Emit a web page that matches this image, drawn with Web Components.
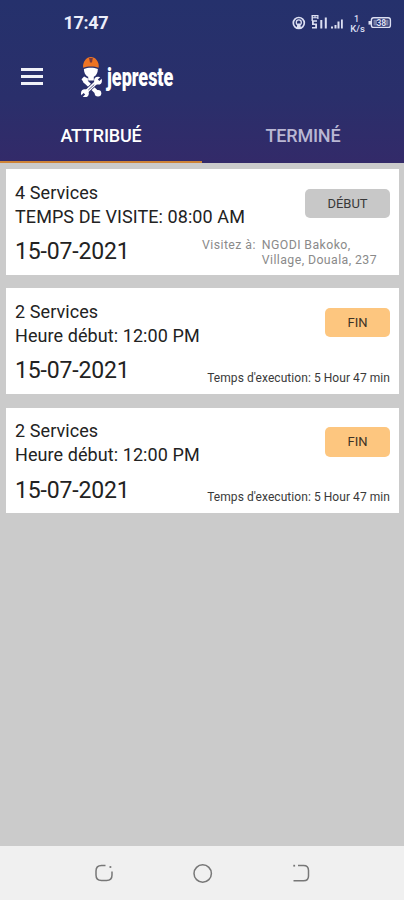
<!DOCTYPE html>
<html lang="fr">
<head>
<meta charset="UTF-8">
<meta name="viewport" content="width=device-width, initial-scale=1">
<title>jepreste</title>
<style>
  html, body {
    margin: 0;
    height: 100%;
  }

  body {
    font-family: Roboto, "Liberation Sans", sans-serif;
    color: #222;
    overflow: hidden;
  }
</style>
</head>
<body>
<jp-app>
  <jp-header slot="header">
    <jp-status-bar time="17:47"></jp-status-bar>
    <jp-toolbar></jp-toolbar>
    <jp-tabs>
      <jp-tab active>ATTRIBUÉ</jp-tab>
      <jp-tab>TERMINÉ</jp-tab>
    </jp-tabs>
  </jp-header>

  <jp-card>
    <span slot="title">4 Services</span>
    <span slot="subtitle">TEMPS DE VISITE: 08:00 AM</span>
    <span slot="date">15-07-2021</span>
    <jp-button slot="action" kind="start">DÉBUT</jp-button>
    <jp-address slot="detail" label="Visitez à:">NGODI Bakoko,<br>Village, Douala, 237</jp-address>
  </jp-card>

  <jp-card>
    <span slot="title">2 Services</span>
    <span slot="subtitle">Heure début: 12:00 PM</span>
    <span slot="date">15-07-2021</span>
    <jp-button slot="action" kind="end">FIN</jp-button>
    <jp-duration slot="detail">Temps d'execution: 5 Hour 47 min</jp-duration>
  </jp-card>

  <jp-card>
    <span slot="title">2 Services</span>
    <span slot="subtitle">Heure début: 12:00 PM</span>
    <span slot="date">15-07-2021</span>
    <jp-button slot="action" kind="end">FIN</jp-button>
    <jp-duration slot="detail">Temps d'execution: 5 Hour 47 min</jp-duration>
  </jp-card>

  <jp-nav-bar slot="footer"></jp-nav-bar>
</jp-app>

<script>
// Base commune : chaque composant fournit son template()
class JpElement extends HTMLElement {
  constructor() {
    super();
    this.attachShadow({ mode: 'open' });
  }

  connectedCallback() {
    this.shadowRoot.innerHTML = this.template();
  }
}

// ===== STRUCTURE =====
class JpApp extends JpElement {
  template() {
    return `
      <style>
        :host {
          display: flex;
          flex-direction: column;
          height: 100vh;
          background: #cbcbcb;
        }

        main {
          flex: 1;
          display: flex;
          flex-direction: column;
          gap: 13.7px;
          padding: 6.5px 5px 0 6px;
        }
      </style>
      <slot name="header"></slot>
      <main><slot></slot></main>
      <slot name="footer"></slot>
    `;
  }
}

class JpHeader extends JpElement {
  template() {
    return `
      <style>
        :host {
          display: flex;
          flex-direction: column;
          height: 162.5px;
          background: linear-gradient(#25316c, #2a2f6b 60%, #332a69);
          color: #fff;
        }
      </style>
      <slot></slot>
    `;
  }
}

// ===== BARRE DE STATUT =====
class JpStatusBar extends JpElement {
  template() {
    return `
      <style>
        :host {
          display: flex;
          justify-content: space-between;
          align-items: center;
          height: 46px;
          padding: 0 12px 0 63.5px;
          color: #eceefa;
        }

        time {
          font-size: 18px;
          font-weight: 700;
          line-height: 46px;
          letter-spacing: -0.3px;
        }
      </style>
      <time>${this.getAttribute('time')}</time>
      <svg width="101" height="26" viewBox="291 10 101 26" fill="#dcdff2" aria-hidden="true">
        <!-- Point d'accès -->
        <circle cx="298.8" cy="23" r="5.5" fill="none" stroke="#dcdff2" stroke-width="1.7"/>
        <circle cx="298.8" cy="22.4" r="2.5" fill="none" stroke="#dcdff2" stroke-width="1.3"/>
        <path d="M297.5 23.5h2.6l1 5h-4.6z"/>
        <!-- Réseaux -->
        <path d="M311.5 15h7v1.2h-7zM311.5 17.2h7v1h-7zM311.5 15h1.4v6h-1.4zM314.5 15h1v3h-1zM317.3 15h1.2v4h-1.2z"/>
        <path d="M312 20.2h5v1.6h-3.2v1.6h3.2v5h-5v-1.5h3.2v-2h-3.2z"/>
        <path d="M320.3 20h2v8.5h-2zM324.8 17.5h2v11h-2z"/>
        <path d="M331 26.5h2v2h-2zM334.5 25h2v3.5h-2zM337.5 21.5h2v7h-2zM341 19.5h1.8v9H341z"/>
        <!-- Débit -->
        <text x="356.5" y="21.5" font-size="9" font-weight="500" text-anchor="middle">1</text>
        <text x="357.5" y="32" font-size="9.5" font-weight="500" text-anchor="middle">K/s</text>
        <!-- Batterie -->
        <path d="M373.6 17.8h14.6q2.2 0 2.2 2.2v5.2q0 2.2-2.2 2.2h-14.6q-2.2 0-2.2-2.2V20q0-2.2 2.2-2.2z" fill="none" stroke="#dcdff2" stroke-width="1.4"/>
        <path d="M368.5 21h3v3.6h-3z"/>
        <path d="M373.5 19.8h3.5v5.6h-3.5zM385.5 19.8h3v5.6h-3z" opacity=".45"/>
        <text x="381.3" y="25.8" font-size="8.5" font-weight="700" text-anchor="middle">38</text>
      </svg>
    `;
  }
}

// ===== MENU + LOGO =====
class JpToolbar extends JpElement {
  template() {
    return `
      <style>
        :host {
          display: flex;
          align-items: center;
          height: 64px;
          padding-left: 21px;
        }

        button {
          width: 22px;
          height: 17px;
          padding: 0;
          border: 0;
          background: none;
          display: flex;
          flex-direction: column;
          justify-content: space-between;
          margin: -3px 37px 0 0;
        }

        i {
          display: block;
          height: 2.6px;
          background: #f0f1f8;
        }

        .brand {
          margin: -2px 0 0 1px;
          font-size: 26px;
          font-weight: 900;
          line-height: 36px;
          transform: scaleX(0.69);
          transform-origin: left;
        }
      </style>
      <button aria-label="Menu"><i></i><i></i><i></i></button>
      <svg width="26" height="52" viewBox="80 52 26 52" aria-hidden="true">
        <!-- Casque -->
        <path d="M83.2 67.8c-.5-2 .1-5.6 2.2-8 2-3.6 8.6-4 11 0 2.2 2.3 2.7 6 2.2 8-4.2-1.6-11-1.6-15.4 0z" fill="#ee7423"/>
        <path d="M89 58h3.8l-.8 4.5h-2z" fill="#7b3a3d"/>
        <!-- Tête -->
        <path d="M83.9 68.9c4-1.6 9.8-1.6 14 0 0 4.2-2 6.8-4 7.8h-6c-2.5-1.1-4-4.2-4-7.8z" fill="#fff"/>
        <path d="M88.2 76h5.6v4.5h-5.6z" fill="#fff"/>
        <!-- Clé et marteau croisés -->
        <path d="M84.5 80.5l12.5 12" stroke="#fff" stroke-width="4"/>
        <path d="M81.5 79.2l2.6-2.7 3.9 2-.3 4-3.5.7z" fill="#fff"/>
        <circle cx="98" cy="93.2" r="3.3" fill="#fff"/>
        <path d="M97.5 81.2L84.8 93" stroke="#2a2f6b" stroke-width="5"/>
        <path d="M97.5 81.2L84.8 93" stroke="#fff" stroke-width="3.6"/>
        <circle cx="98" cy="80.7" r="3.9" fill="#fff"/>
        <circle cx="84.9" cy="93.2" r="3.9" fill="#fff"/>
        <path d="M98.6 80.3l4-4M84.4 93.7l-4 4" stroke="#2a2f6b" stroke-width="2.2"/>
        <path d="M94.3 84.5l-6 5.5" stroke="#2a2f6b" stroke-width=".8"/>
      </svg>
      <span class="brand">jepreste</span>
    `;
  }
}

// ===== ONGLETS =====
class JpTabs extends JpElement {
  template() {
    return `
      <style>
        :host {
          display: flex;
          flex: 1;
        }
      </style>
      <slot></slot>
    `;
  }
}

class JpTab extends JpElement {
  template() {
    return `
      <style>
        :host {
          flex: 1;
          box-sizing: border-box;
          text-align: center;
          font-size: 18px;
          font-weight: 500;
          line-height: 52px;
          letter-spacing: -0.2px;
          height: 52.5px;
          color: #b9b7d3;
          border-bottom: 2.5px solid transparent;
        }

        :host([active]) {
          color: #fff;
          border-bottom-color: #cf8437;
        }
      </style>
      <slot></slot>
    `;
  }
}

// ===== CARTES =====
class JpCard extends JpElement {
  template() {
    return `
      <style>
        :host {
          display: flex;
          flex-direction: column;
          box-sizing: border-box;
          height: 105.6px;
          padding: 11.5px 9px 0 9px;
          background: #fff;
          white-space: nowrap;
        }

        .row {
          display: flex;
          justify-content: space-between;
          align-items: flex-start;
        }

        .top {
          height: 49px;
        }

        .lines {
          font-size: 18px;
          line-height: 24px;
          letter-spacing: 0.08px;
        }

        .lines div {
          height: 24px;
        }

        .action {
          padding-top: 8px;
        }

        .date {
          font-size: 23px;
          line-height: 27px;
          letter-spacing: -0.15px;
          padding-top: 8.5px;
        }
      </style>
      <div class="row top">
        <div class="lines">
          <div><slot name="title"></slot></div>
          <div><slot name="subtitle"></slot></div>
        </div>
        <div class="action"><slot name="action"></slot></div>
      </div>
      <div class="row">
        <div class="date"><slot name="date"></slot></div>
        <slot name="detail"></slot>
      </div>
    `;
  }
}

class JpButton extends JpElement {
  template() {
    return `
      <style>
        :host {
          display: block;
        }

        button {
          display: block;
          width: 65px;
          height: 29.5px;
          padding: 0;
          border: 0;
          border-radius: 5px;
          background: #fdc67f;
          color: #3c3226;
          font: 400 13px/30px Roboto, "Liberation Sans", sans-serif;
        }

        :host([kind="start"]) button {
          width: 85px;
          background: #c8c8c8;
          color: #383838;
        }
      </style>
      <button><slot></slot></button>
    `;
  }
}

class JpAddress extends JpElement {
  template() {
    return `
      <style>
        :host {
          display: flex;
          gap: 6px;
          padding: 8px 13px 0 0;
          font-size: 12.3px;
          line-height: 15px;
          letter-spacing: 0.42px;
          color: #8a8a8a;
        }
      </style>
      <span>${this.getAttribute('label')}</span>
      <span><slot></slot></span>
    `;
  }
}

class JpDuration extends JpElement {
  template() {
    return `
      <style>
        :host {
          display: block;
          padding-top: 22px;
          font-size: 12px;
          line-height: 15px;
          letter-spacing: 0.06px;
          color: #3a3a3a;
        }
      </style>
      <slot></slot>
    `;
  }
}

// ===== NAVIGATION SYSTÈME =====
class JpNavBar extends JpElement {
  template() {
    return `
      <style>
        :host {
          display: flex;
          justify-content: space-between;
          align-items: center;
          box-sizing: border-box;
          height: 54px;
          padding: 0 92px 0 93px;
          background: #f0f0f0;
        }

        svg {
          fill: none;
          stroke: #777;
          stroke-width: 1.5;
        }
      </style>
      <svg width="22" height="22" viewBox="0 0 22 22">
        <path d="M12.5 3.5H8.5Q3 3.5 3 9V13Q3 18.5 8.5 18.5H13.5Q19 18.5 19 13V9.5"/>
        <path d="M16.5 5h1.8" stroke-width="1.8"/>
      </svg>
      <svg width="22" height="22" viewBox="0 0 22 22">
        <circle cx="10.7" cy="11.5" r="8.7"/>
      </svg>
      <svg width="22" height="22" viewBox="0 0 22 22">
        <path d="M8 3.5H13.5Q18.5 3.5 18.5 8.5V14Q18.5 18.8 13.5 18.8H3.5"/>
        <path d="M3.3 3.7h1.8" stroke-width="1.8"/>
      </svg>
    `;
  }
}

customElements.define('jp-app', JpApp);
customElements.define('jp-header', JpHeader);
customElements.define('jp-status-bar', JpStatusBar);
customElements.define('jp-toolbar', JpToolbar);
customElements.define('jp-tabs', JpTabs);
customElements.define('jp-tab', JpTab);
customElements.define('jp-card', JpCard);
customElements.define('jp-button', JpButton);
customElements.define('jp-address', JpAddress);
customElements.define('jp-duration', JpDuration);
customElements.define('jp-nav-bar', JpNavBar);
</script>
</body>
</html>
